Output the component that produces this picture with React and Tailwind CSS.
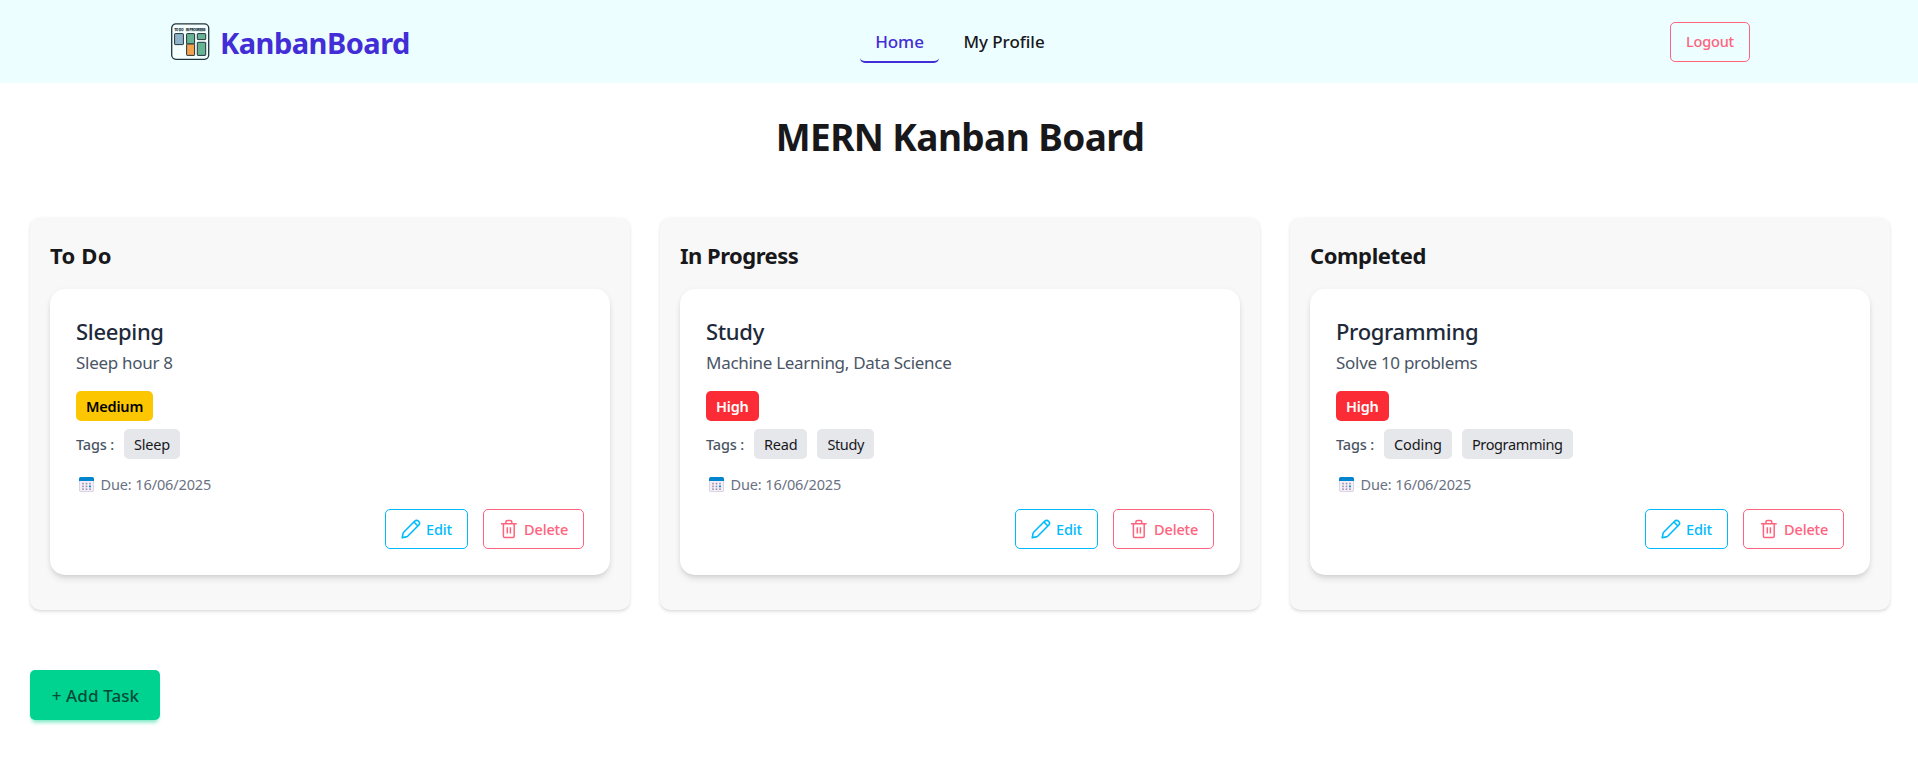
const COLUMNS = [
  {
    title: 'To Do',
    titleClass: 'tracking-[0.25px]',
    task: {
      title: 'Sleeping',
      text: 'Sleep hour 8',
      priority: 'Medium',
      tags: [['Sleep', 'tracking-[-0.2px]']],
    },
  },
  {
    title: 'In Progress',
    titleClass: 'tracking-[-0.52px]',
    task: {
      title: 'Study',
      text: 'Machine Learning, Data Science',
      priority: 'High',
      tags: [
        ['Read', 'tracking-[-0.2px]'],
        ['Study', 'tracking-[-0.4px]'],
      ],
    },
  },
  {
    title: 'Completed',
    titleClass: 'tracking-[-0.4px]',
    task: {
      title: 'Programming',
      text: 'Solve 10 problems',
      priority: 'High',
      tags: [
        ['Coding', 'tracking-[-0.1px]'],
        ['Programming', 'tracking-[-0.36px]'],
      ],
    },
  },
];

function Logo() {
  return (
    <svg className="h-[38px] w-[39px] overflow-visible" viewBox="0 0 39 38" fill="none">
      <rect x="0.7" y="0.9" width="37" height="35.4" rx="4.2" fill="#f4ffff" stroke="#22343a" strokeWidth="1.3" />
      <g fill="#22343a" stroke="#22343a" strokeWidth="0.25" fontFamily="Liberation Sans, sans-serif" fontWeight="bold" fontSize="3.9">
        <text x="3.4" y="8" textLength="9" lengthAdjust="spacingAndGlyphs">TO DO</text>
        <text x="15" y="8" textLength="19.5" lengthAdjust="spacingAndGlyphs">IN PROGRESS</text>
      </g>
      <g stroke="#22343a" strokeWidth="1">
        <rect x="3.6" y="10.6" width="8.8" height="11" rx="0.6" fill="#8fb3c8" />
        <rect x="15.6" y="10.6" width="8" height="10.4" rx="0.6" fill="#68b394" />
        <rect x="15.6" y="21" width="8" height="11.4" rx="0.6" fill="#f2a24d" />
        <rect x="26.3" y="10.6" width="8.4" height="6" rx="0.6" fill="#68b394" />
        <rect x="26.3" y="19.3" width="8.4" height="13.1" rx="0.6" fill="#68b394" />
      </g>
    </svg>
  );
}

function PencilIcon() {
  return (
    <svg className="-ml-px size-5" viewBox="0 0 20 20" fill="none" stroke="currentColor" strokeWidth="1.6" strokeLinecap="round" strokeLinejoin="round">
      <path d="M1.2 18.8 2 14.7Q2.2 13.7 2.9 13L13.6 2.3A2.7 2.7 0 0 1 17.6 6.3L6.9 17Q6.2 17.7 5.2 17.9ZM12.9 3l4 4" />
    </svg>
  );
}

function TrashIcon() {
  return (
    <svg className="size-5" viewBox="0 0 20 20" fill="none" stroke="currentColor" strokeWidth="1.5">
      <path d="M2 4.7h15.7M4.4 4.7v12.6q0 1.2 1.2 1.2h8.4q1.2 0 1.2-1.2V4.7M6.9 4.7V3q0-1.6 1.6-1.6h2.7q1.6 0 1.6 1.6v1.7M8.3 8.2v6.4M11.4 8.2v6.4" />
    </svg>
  );
}

function CalendarIcon() {
  const dots = [[4, 6.6], [7.5, 6.6], [11, 6.6], [4, 9.4], [7.5, 9.4], [4, 12.2], [7.5, 12.2], [11, 12.2]];
  return (
    <svg className="ml-[3px] size-[15px]" viewBox="0 0 15 15">
      <rect x="0.4" y="0.6" width="14.2" height="14" rx="1.6" fill="#f3eef8" stroke="#cfc6da" strokeWidth="0.8" />
      <path d="M0 4V1.8Q0 0 1.8 0h11.4Q15 0 15 1.8V4Z" fill="#0084ce" />
      {dots.map(([x, y]) => (
        <rect key={`${x}-${y}`} x={x - 0.8} y={y - 0.8} width="1.6" height="1.6" fill="#9a90a8" />
      ))}
      <rect x="10.1" y="8.5" width="1.8" height="1.8" fill="#0084ce" />
    </svg>
  );
}

function TaskCard({ task }) {
  return (
    <article className="mt-[16.5px] rounded-[15px] bg-white px-[26px] py-[26px] shadow-[0_5px_7.5px_-1px_rgba(0,0,0,0.1),0_2.5px_5px_-2.5px_rgba(0,0,0,0.1),0_0_6px_rgba(0,0,0,0.03)]">
      <h3 className="text-[22px] leading-8 font-medium tracking-[-0.33px] text-gray-800">{task.title}</h3>
      <p className="text-[17px] leading-[31px] tracking-[-0.29px] text-gray-600">{task.text}</p>
      <div className="mt-[13px] flex">
        <span
          className={`flex h-[30px] items-center rounded-[5px] px-2.5 pt-px text-[14.5px] font-semibold tracking-[-0.2px] ${
            task.priority === 'High' ? 'bg-[#fb2c36] text-white' : 'bg-[#fcc700] text-black'
          }`}
        >
          {task.priority}
        </span>
      </div>
      <div className="mt-2 flex h-[30px] items-center gap-2.5">
        <span className="w-[38px] pt-px text-[14.5px] font-medium tracking-[-0.15px] whitespace-nowrap text-gray-600">Tags :</span>
        {task.tags.map(([tag, spacing]) => (
          <span key={tag} className={`flex h-[30px] items-center rounded-[5px] bg-gray-200 px-2.5 pt-px text-[14.5px] text-[#18181b] ${spacing}`}>
            {tag}
          </span>
        ))}
      </div>
      <div className="mt-3.5 flex h-[23px] items-center text-gray-500">
        <CalendarIcon />
        <span className="ml-[6.5px] text-[14.5px] tracking-[-0.12px]">Due: 16/06/2025</span>
      </div>
      <div className="mt-[13px] flex justify-end gap-[15px]">
        <button className="flex h-10 w-[83px] items-center rounded-[5px] border border-[#00bafe] pl-[16px] text-[14.5px] font-medium tracking-[-0.16px] text-[#00bafe]">
          <PencilIcon />
          <span className="ml-[5px] pt-px">Edit</span>
        </button>
        <button className="flex h-10 w-[101px] items-center rounded-[5px] border border-[#ff637e] pl-[15px] text-[14.5px] font-medium tracking-[-0.14px] text-[#ff637e]">
          <TrashIcon />
          <span className="ml-[5px] pt-px">Delete</span>
        </button>
      </div>
    </article>
  );
}

export default function App() {
  return (
    <div className="h-[770px] overflow-hidden bg-white font-['Noto_Sans','Open_Sans',sans-serif] text-[#18181b]">
      <div className="w-[1920px]">
        <header className="flex h-[83px] items-center bg-cyan-50 px-[170px]">
          <div className="flex flex-1 items-center gap-[10px] pl-px">
            <Logo />
            <span className="pt-[3px] text-[29px] leading-10 font-bold tracking-[-0.52px] text-indigo-700">KanbanBoard</span>
          </div>
          <nav className="flex gap-2.5 pt-0.5 pr-0.5 text-[17px] font-medium">
            <a className="flex h-10 w-[79px] items-center justify-center rounded-[5px] border-b-[2.5px] border-indigo-700 pl-px tracking-[-0.07px] text-indigo-700">Home</a>
            <a className="flex h-10 w-[111px] items-center justify-center border-b-[2.5px] border-transparent tracking-[-0.04px]">My Profile</a>
          </nav>
          <div className="flex flex-1 justify-end">
            <button className="h-10 w-20 rounded-[5px] border border-[#ff637e] text-[14.5px] font-medium tracking-[-0.21px] text-[#ff637e]">Logout</button>
          </div>
        </header>
        <main className="px-[30px]">
          <h1 className="pt-[29px] text-center text-[37px] leading-[50px] font-bold tracking-[-0.6px]">MERN Kanban Board</h1>
          <div className="mt-[55.5px] grid grid-cols-3 gap-[30px]">
            {COLUMNS.map((column) => (
              <section
                key={column.title}
                className="rounded-[10px] bg-[#f8f8f8] px-5 pt-[19px] pb-[35px] shadow-[0_1.25px_3.75px_rgba(0,0,0,0.1),0_1.25px_2.5px_-1.25px_rgba(0,0,0,0.1)]"
              >
                <h2 className={`text-[22px] leading-9 font-bold ${column.titleClass}`}>{column.title}</h2>
                <TaskCard task={column.task} />
              </section>
            ))}
          </div>
          <button className="mt-[60px] h-[50px] w-[130px] rounded-[5px] bg-[#00d390] pt-px pl-px text-[17px] font-medium tracking-[0.1px] text-[#004c39] shadow-[0_4px_4px_-2px_rgba(0,211,144,0.35),0_5px_4px_-3px_rgba(0,211,144,0.3)]">
            + Add Task
          </button>
        </main>
      </div>
    </div>
  );
}
